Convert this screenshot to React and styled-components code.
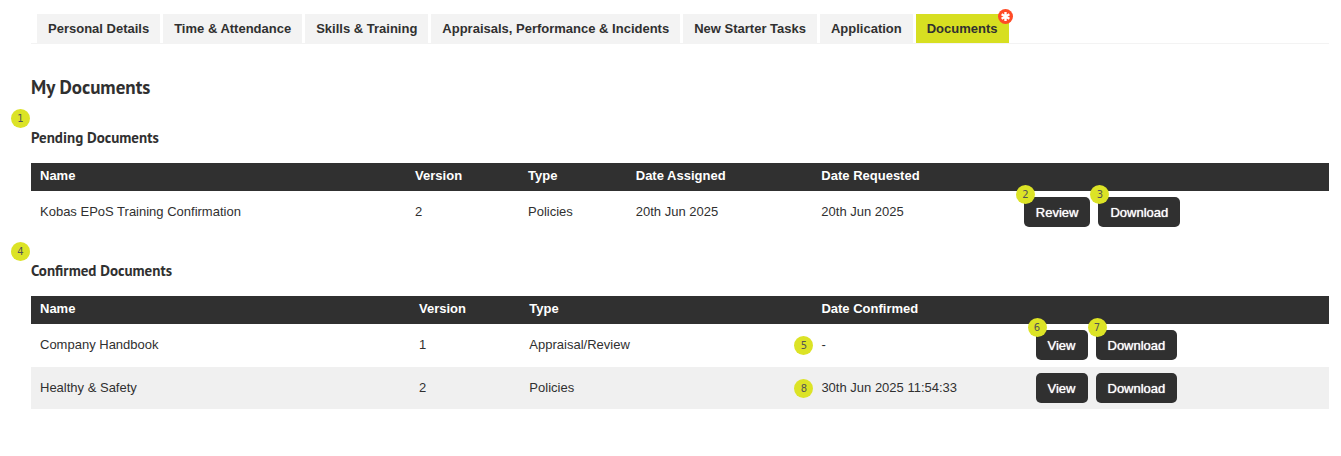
import styled, { createGlobalStyle } from 'styled-components';

const GlobalStyle = createGlobalStyle`
  * {
    box-sizing: border-box;
  }
  body {
    margin: 0;
    background: #fff;
    color: #303030;
    font-family: 'Liberation Sans', Arial, sans-serif;
    font-size: 13px;
    line-height: 18px;
  }
`;

const Page = styled.main`
  padding: 14px 12px 40px 31px;
`;

const TabList = styled.nav`
  display: flex;
  gap: 3px;
  padding-left: 6px;
  border-bottom: 1px solid #f3f3f3;
`;

const Tab = styled.a`
  position: relative;
  padding: 0 11px;
  background: ${({ $active }) => ($active ? '#d7df21' : '#f3f3f3')};
  color: #303030;
  font-weight: bold;
  line-height: 29px;
  text-decoration: none;
  white-space: nowrap;
`;

const Alert = styled.svg`
  position: absolute;
  top: -5px;
  right: -4px;
  width: 15px;
  height: 15px;
`;

const Title = styled.h1`
  margin: 31px 0 0;
  font-family: 'PT Sans', Lato, sans-serif;
  font-size: 19px;
  line-height: 25px;
`;

const Section = styled.section`
  padding-top: 27px;

  &:first-of-type {
    padding-top: 28px;
  }
`;

const Heading = styled.h2`
  position: relative;
  margin: 0 0 15px;
  font-family: 'PT Sans', Lato, sans-serif;
  font-size: 15px;
  line-height: 20px;
`;

const Table = styled.table`
  width: 100%;
  table-layout: fixed;
  border-collapse: collapse;
  text-align: left;

  th {
    height: 28px;
    padding: 4px 9px 6px;
    background: #303030;
    color: #fff;
    white-space: nowrap;
  }
  td {
    position: relative;
    padding: 6px 9px;
  }
  tbody tr:first-child td {
    padding-bottom: 7px;
  }
  tbody tr:nth-child(even) {
    background: #f0f0f0;
  }
`;

const Column = styled.col`
  width: ${({ $width }) => $width};
`;

const Actions = styled.div`
  display: flex;
  gap: 8px;
`;

const Button = styled.button`
  position: relative;
  height: 30px;
  padding: 2px 12px 0;
  border: 0;
  border-radius: 5px;
  background: #303030;
  color: #fff;
  font: inherit;
  text-shadow: 0 0 1px #fff;
  cursor: pointer;
`;

const Marker = styled.span`
  position: absolute;
  width: 19px;
  height: 19px;
  border-radius: 50%;
  background: #dce326;
  color: #555;
  font-family: 'DejaVu Sans', Verdana, sans-serif;
  font-size: 10px;
  font-weight: normal;
  line-height: 19px;
  text-align: center;
  text-shadow: none;
`;

const HeadingMarker = styled(Marker)`
  top: -19px;
  left: -20px;
`;

const CellMarker = styled(Marker)`
  top: 12px;
  left: -18px;
`;

const ButtonMarker = styled(Marker)`
  top: -12px;
  left: -8px;
`;

const tabs = [
  'Personal Details',
  'Time & Attendance',
  'Skills & Training',
  'Appraisals, Performance & Incidents',
  'New Starter Tasks',
  'Application',
  'Documents',
];

const pending = {
  title: 'Pending Documents',
  marker: 1,
  columns: [
    { label: 'Name', width: '28.9%' },
    { label: 'Version', width: '8.7%' },
    { label: 'Type', width: '8.3%' },
    { label: 'Date Assigned', width: '14.3%' },
    { label: 'Date Requested', width: '15.6%' },
  ],
  rows: [
    {
      cells: ['Kobas EPoS Training Confirmation', '2', 'Policies', '20th Jun 2025', '20th Jun 2025'],
      actions: [
        { label: 'Review', marker: 2 },
        { label: 'Download', marker: 3 },
      ],
    },
  ],
};

const confirmed = {
  title: 'Confirmed Documents',
  marker: 4,
  columns: [
    { label: 'Name', width: '29.2%' },
    { label: 'Version', width: '8.5%' },
    { label: 'Type', width: '22.5%' },
    { label: 'Date Confirmed', width: '16.5%' },
  ],
  rows: [
    {
      cells: ['Company Handbook', '1', 'Appraisal/Review', '-'],
      dateMarker: 5,
      actions: [
        { label: 'View', marker: 6 },
        { label: 'Download', marker: 7 },
      ],
    },
    {
      cells: ['Healthy & Safety', '2', 'Policies', '30th Jun 2025 11:54:33'],
      dateMarker: 8,
      actions: [{ label: 'View' }, { label: 'Download' }],
    },
  ],
};

function AlertIcon() {
  return (
    <Alert viewBox="0 0 15 15" aria-hidden="true">
      <circle cx="7.5" cy="7.5" r="7.5" fill="#ff4b26" />
      <path
        d="M7.5 3v9M3.6 5.25l7.8 4.5M3.6 9.75l7.8-4.5"
        stroke="#fff"
        strokeWidth="2.4"
      />
    </Alert>
  );
}

function DocumentSection({ title, marker, columns, rows }) {
  return (
    <Section>
      <Heading>
        <HeadingMarker>{marker}</HeadingMarker>
        {title}
      </Heading>
      <Table aria-label={title}>
        <colgroup>
          {columns.map(({ label, width }) => (
            <Column key={label} $width={width} />
          ))}
          <col />
        </colgroup>
        <thead>
          <tr>
            {columns.map(({ label }) => (
              <th key={label} scope="col">
                {label}
              </th>
            ))}
            <th aria-label="Actions" />
          </tr>
        </thead>
        <tbody>
          {rows.map(({ cells, dateMarker, actions }) => (
            <tr key={cells[0]}>
              {cells.map((cell, index) => (
                <td key={columns[index].label}>
                  {dateMarker && index === cells.length - 1 && (
                    <CellMarker>{dateMarker}</CellMarker>
                  )}
                  {cell}
                </td>
              ))}
              <td>
                <Actions>
                  {actions.map((action) => (
                    <Button key={action.label} type="button">
                      {action.marker && <ButtonMarker>{action.marker}</ButtonMarker>}
                      {action.label}
                    </Button>
                  ))}
                </Actions>
              </td>
            </tr>
          ))}
        </tbody>
      </Table>
    </Section>
  );
}

export default function App() {
  return (
    <>
      <GlobalStyle />
      <Page>
        <TabList>
          {tabs.map((tab) => (
            <Tab key={tab} href="#" $active={tab === 'Documents'}>
              {tab}
              {tab === 'Documents' && <AlertIcon />}
            </Tab>
          ))}
        </TabList>
        <Title>My Documents</Title>
        <DocumentSection {...pending} />
        <DocumentSection {...confirmed} />
      </Page>
    </>
  );
}
